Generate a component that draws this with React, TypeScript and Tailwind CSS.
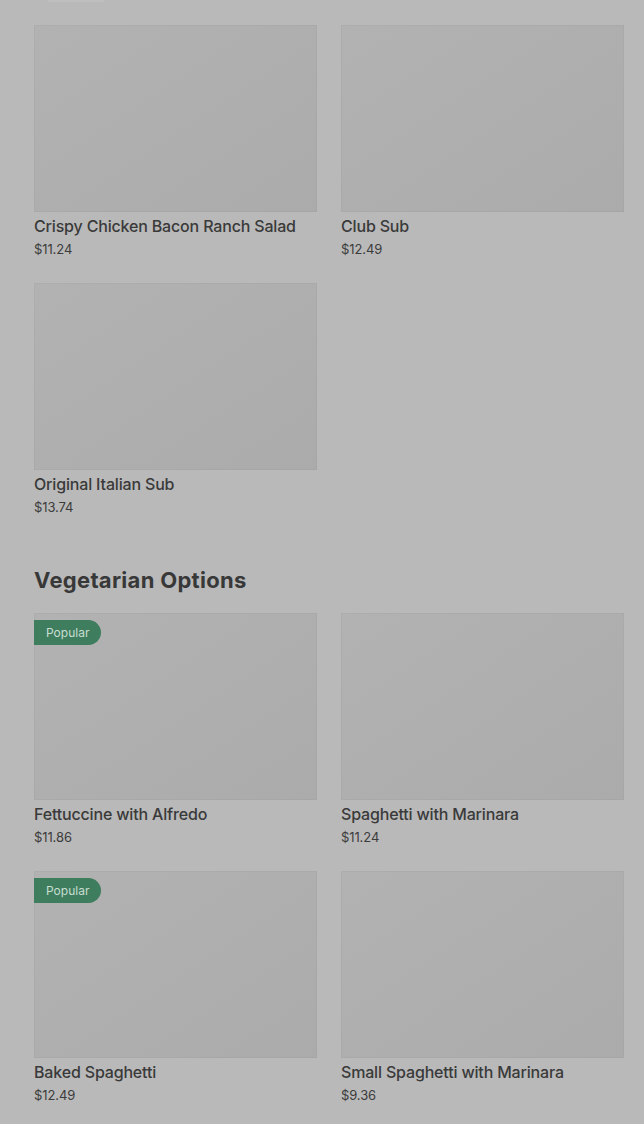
import React from "react";

type Item = { name: string; price: string; popular?: boolean };

const Card = ({ item }: { item: Item }) => (
  <div className="flex flex-col">
    <div className="relative h-[187px] w-full bg-gradient-to-br from-[#b2b2b2] to-[#ababab] shadow-[inset_0_0_0_1px_rgba(0,0,0,0.025)]">
      {item.popular && (
        <div className="absolute left-0 top-[7px] flex h-[25px] items-center rounded-r-full bg-[#3e7d5e] pl-[12px] pr-[12px] text-[12px] text-[#c9ddd1]">
          Popular
        </div>
      )}
    </div>
    <div className="mt-[2px] text-[16px] font-medium leading-6 tracking-[-0.17px] text-[#3a3a3a]">{item.name}</div>
    <div className="mt-[1px] text-[13px] leading-5 tracking-[-0.1px] text-[#3c3c3c]">{item.price}</div>
  </div>
);

export default function App() {
  const first: Item[] = [
    { name: "Crispy Chicken Bacon Ranch Salad", price: "$11.24" },
    { name: "Club Sub", price: "$12.49" },
    { name: "Original Italian Sub", price: "$13.74" },
  ];
  const veg: Item[] = [
    { name: "Fettuccine with Alfredo", price: "$11.86", popular: true },
    { name: "Spaghetti with Marinara", price: "$11.24" },
    { name: "Baked Spaghetti", price: "$12.49", popular: true },
    { name: "Small Spaghetti with Marinara", price: "$9.36" },
  ];
  return (
    <div
      className="min-h-[1124px] w-full bg-[#b9b9b9] pl-[34px] pr-[20px]"
      style={{ fontFamily: "Inter, 'Noto Sans', sans-serif" }}
    >
      <div className="ml-[14px] h-[2px] w-[56px] bg-[#bfbfbf]" />
      <div className="mt-[23px] grid grid-cols-2 gap-x-[24px] gap-y-[24px]">
        {first.map((it) => (
          <Card key={it.name} item={it} />
        ))}
      </div>
      <h2 className="mt-[49px] text-[22px] font-bold leading-7 tracking-[0.3px] text-[#383838]">
        Vegetarian Options
      </h2>
      <div className="mt-[19px] grid grid-cols-2 gap-x-[24px] gap-y-[24px] pb-[20px]">
        {veg.map((it) => (
          <Card key={it.name} item={it} />
        ))}
      </div>
    </div>
  );
}
